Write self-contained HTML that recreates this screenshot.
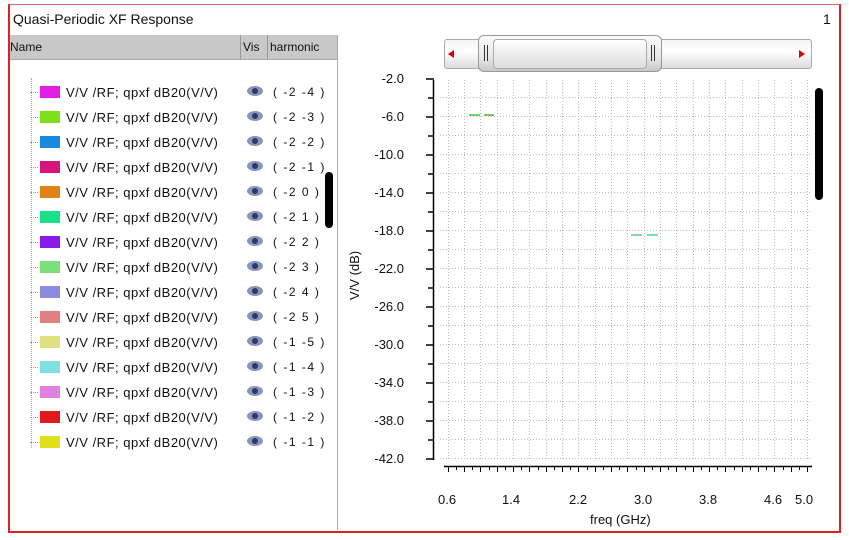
<!DOCTYPE html>
<html><head><style>
body{margin:0;width:849px;height:540px;background:#fff;font-family:"Liberation Sans","DejaVu Sans",sans-serif;position:relative;overflow:hidden}
.a{position:absolute}
.row{position:absolute;left:30px;height:14px;font-size:13px;color:#111;white-space:nowrap}
.sw{position:absolute;left:10px;top:0px;width:20px;height:12px}
.dots{position:absolute;left:0;top:6px;width:8px;border-top:1px dotted #999}
.lbl{position:absolute;left:36px;top:-1px;letter-spacing:0.5px}
.eye{position:absolute;left:217px;top:0px;width:16px;height:10px;border-radius:50%;background:#8a96b8}
.eye:after{content:"";position:absolute;left:5px;top:2px;width:6px;height:6px;border-radius:50%;background:#2a3a6a}
.h{position:absolute;left:243px;top:-1px;letter-spacing:1.5px;font-size:12px}
.yl{position:absolute;left:358px;width:46px;text-align:right;font-size:13px;color:#111}
.xl{position:absolute;top:519px;font-size:13px;color:#111}
</style></head><body>
<div class="a" style="left:8px;top:4px;width:829px;height:526px;border:2px solid #d22;border-top:1px solid #d66"></div>
<div class="a" style="left:13px;top:11px;font-size:14px;color:#111">Quasi-Periodic XF Response</div>
<div class="a" style="left:823px;top:11px;font-size:14px;color:#111">1</div>
<div class="a" style="left:10px;top:35px;width:327px;height:24px;background:#c8c8c8;border-bottom:1px solid #aaa"></div>
<div class="a" style="left:10px;top:40px;font-size:12px;color:#111">Name</div>
<div class="a" style="left:240px;top:35px;width:1px;height:24px;background:#999"></div>
<div class="a" style="left:243px;top:40px;font-size:12px;color:#111">Vis</div>
<div class="a" style="left:267px;top:35px;width:1px;height:24px;background:#999"></div>
<div class="a" style="left:270px;top:40px;font-size:12px;color:#111">harmonic</div>
<div class="a" style="left:337px;top:35px;width:1px;height:495px;background:#aaa"></div>
<div class="a" style="left:31px;top:78px;height:370px;border-left:1px dotted #aaa"></div>
<div class="a" style="left:325px;top:172px;width:8px;height:56px;background:#000;border-radius:4px"></div>

<div class="row" style="top:86px"><div class="dots"></div><div class="sw" style="background:#e21ee2"></div><div class="lbl">V/V /RF; qpxf dB20(V/V)</div><div class="eye"></div><div class="h">( -2 -4 )</div></div>
<div class="row" style="top:111px"><div class="dots"></div><div class="sw" style="background:#7de01a"></div><div class="lbl">V/V /RF; qpxf dB20(V/V)</div><div class="eye"></div><div class="h">( -2 -3 )</div></div>
<div class="row" style="top:136px"><div class="dots"></div><div class="sw" style="background:#1a8ae0"></div><div class="lbl">V/V /RF; qpxf dB20(V/V)</div><div class="eye"></div><div class="h">( -2 -2 )</div></div>
<div class="row" style="top:161px"><div class="dots"></div><div class="sw" style="background:#d6157a"></div><div class="lbl">V/V /RF; qpxf dB20(V/V)</div><div class="eye"></div><div class="h">( -2 -1 )</div></div>
<div class="row" style="top:186px"><div class="dots"></div><div class="sw" style="background:#e0821a"></div><div class="lbl">V/V /RF; qpxf dB20(V/V)</div><div class="eye"></div><div class="h">( -2 0 )</div></div>
<div class="row" style="top:211px"><div class="dots"></div><div class="sw" style="background:#1ae08a"></div><div class="lbl">V/V /RF; qpxf dB20(V/V)</div><div class="eye"></div><div class="h">( -2 1 )</div></div>
<div class="row" style="top:236px"><div class="dots"></div><div class="sw" style="background:#8a1ae8"></div><div class="lbl">V/V /RF; qpxf dB20(V/V)</div><div class="eye"></div><div class="h">( -2 2 )</div></div>
<div class="row" style="top:261px"><div class="dots"></div><div class="sw" style="background:#7ae07a"></div><div class="lbl">V/V /RF; qpxf dB20(V/V)</div><div class="eye"></div><div class="h">( -2 3 )</div></div>
<div class="row" style="top:286px"><div class="dots"></div><div class="sw" style="background:#8a8ae0"></div><div class="lbl">V/V /RF; qpxf dB20(V/V)</div><div class="eye"></div><div class="h">( -2 4 )</div></div>
<div class="row" style="top:311px"><div class="dots"></div><div class="sw" style="background:#e08080"></div><div class="lbl">V/V /RF; qpxf dB20(V/V)</div><div class="eye"></div><div class="h">( -2 5 )</div></div>
<div class="row" style="top:336px"><div class="dots"></div><div class="sw" style="background:#e0e080"></div><div class="lbl">V/V /RF; qpxf dB20(V/V)</div><div class="eye"></div><div class="h">( -1 -5 )</div></div>
<div class="row" style="top:361px"><div class="dots"></div><div class="sw" style="background:#80e0e0"></div><div class="lbl">V/V /RF; qpxf dB20(V/V)</div><div class="eye"></div><div class="h">( -1 -4 )</div></div>
<div class="row" style="top:386px"><div class="dots"></div><div class="sw" style="background:#e080e0"></div><div class="lbl">V/V /RF; qpxf dB20(V/V)</div><div class="eye"></div><div class="h">( -1 -3 )</div></div>
<div class="row" style="top:411px"><div class="dots"></div><div class="sw" style="background:#e01a1a"></div><div class="lbl">V/V /RF; qpxf dB20(V/V)</div><div class="eye"></div><div class="h">( -1 -2 )</div></div>
<div class="row" style="top:436px"><div class="dots"></div><div class="sw" style="background:#e0e01a"></div><div class="lbl">V/V /RF; qpxf dB20(V/V)</div><div class="eye"></div><div class="h">( -1 -1 )</div></div>

<!-- slider -->
<div class="a" style="left:444px;top:39px;width:366px;height:28px;border:1px solid #aaa;border-radius:3px;background:linear-gradient(#f4f4f4,#fff 40%,#ddd)"></div>
<div class="a" style="left:448px;top:50px;width:0;height:0;border:4px solid transparent;border-right:6px solid #d00;border-left:0"></div>
<div class="a" style="left:799px;top:50px;width:0;height:0;border:4px solid transparent;border-left:6px solid #d00;border-right:0"></div>
<div class="a" style="left:478px;top:35px;width:182px;height:35px;border:1px solid #999;border-radius:6px;background:linear-gradient(#fafafa,#e8e8e8 60%,#c8c8c8)"></div>
<div class="a" style="left:493px;top:39px;width:152px;height:28px;border:1px solid #aaa;border-radius:4px;background:linear-gradient(#fff,#eee 50%,#ddd)"></div>
<div class="a" style="left:484px;top:45px;width:2px;height:16px;border-left:1px solid #333;border-right:1px solid #333"></div>
<div class="a" style="left:651px;top:45px;width:2px;height:16px;border-left:1px solid #333;border-right:1px solid #333"></div>
<div class="a" style="left:815px;top:88px;width:8px;height:112px;background:#000;border-radius:4px"></div>

<svg class="a" style="left:0;top:0" width="849" height="540">
<g stroke="#bbb" stroke-width="1" stroke-dasharray="1,2">
<line x1="440" y1="97.5" x2="811" y2="97.5"/><line x1="440" y1="116.5" x2="811" y2="116.5"/><line x1="440" y1="135.5" x2="811" y2="135.5"/><line x1="440" y1="154.5" x2="811" y2="154.5"/><line x1="440" y1="173.5" x2="811" y2="173.5"/><line x1="440" y1="192.5" x2="811" y2="192.5"/><line x1="440" y1="211.5" x2="811" y2="211.5"/><line x1="440" y1="230.5" x2="811" y2="230.5"/><line x1="440" y1="249.5" x2="811" y2="249.5"/><line x1="440" y1="268.5" x2="811" y2="268.5"/><line x1="440" y1="287.5" x2="811" y2="287.5"/><line x1="440" y1="306.5" x2="811" y2="306.5"/><line x1="440" y1="325.5" x2="811" y2="325.5"/><line x1="440" y1="344.5" x2="811" y2="344.5"/><line x1="440" y1="363.5" x2="811" y2="363.5"/><line x1="440" y1="382.5" x2="811" y2="382.5"/><line x1="440" y1="401.5" x2="811" y2="401.5"/><line x1="440" y1="420.5" x2="811" y2="420.5"/><line x1="440" y1="439.5" x2="811" y2="439.5"/><line x1="440" y1="458.5" x2="811" y2="458.5"/>
<line x1="448.5" y1="80" x2="448.5" y2="460"/><line x1="464.5" y1="80" x2="464.5" y2="460"/><line x1="480.5" y1="80" x2="480.5" y2="460"/><line x1="497.5" y1="80" x2="497.5" y2="460"/><line x1="513.5" y1="80" x2="513.5" y2="460"/><line x1="529.5" y1="80" x2="529.5" y2="460"/><line x1="546.5" y1="80" x2="546.5" y2="460"/><line x1="562.5" y1="80" x2="562.5" y2="460"/><line x1="578.5" y1="80" x2="578.5" y2="460"/><line x1="595.5" y1="80" x2="595.5" y2="460"/><line x1="611.5" y1="80" x2="611.5" y2="460"/><line x1="627.5" y1="80" x2="627.5" y2="460"/><line x1="644.5" y1="80" x2="644.5" y2="460"/><line x1="660.5" y1="80" x2="660.5" y2="460"/><line x1="676.5" y1="80" x2="676.5" y2="460"/><line x1="693.5" y1="80" x2="693.5" y2="460"/><line x1="709.5" y1="80" x2="709.5" y2="460"/><line x1="725.5" y1="80" x2="725.5" y2="460"/><line x1="742.5" y1="80" x2="742.5" y2="460"/><line x1="758.5" y1="80" x2="758.5" y2="460"/><line x1="774.5" y1="80" x2="774.5" y2="460"/><line x1="791.5" y1="80" x2="791.5" y2="460"/><line x1="807.5" y1="80" x2="807.5" y2="460"/>
</g>
<g stroke="#000" stroke-width="1.5">
<line x1="433.5" y1="80" x2="433.5" y2="460"/>
<line x1="426" y1="79" x2="434" y2="79"/><line x1="426" y1="117" x2="434" y2="117"/><line x1="426" y1="155" x2="434" y2="155"/><line x1="426" y1="193" x2="434" y2="193"/><line x1="426" y1="231" x2="434" y2="231"/><line x1="426" y1="269" x2="434" y2="269"/><line x1="426" y1="307" x2="434" y2="307"/><line x1="426" y1="345" x2="434" y2="345"/><line x1="426" y1="383" x2="434" y2="383"/><line x1="426" y1="421" x2="434" y2="421"/><line x1="426" y1="459" x2="434" y2="459"/>
<line x1="428" y1="98" x2="434" y2="98"/><line x1="428" y1="136" x2="434" y2="136"/><line x1="428" y1="174" x2="434" y2="174"/><line x1="428" y1="212" x2="434" y2="212"/><line x1="428" y1="250" x2="434" y2="250"/><line x1="428" y1="288" x2="434" y2="288"/><line x1="428" y1="326" x2="434" y2="326"/><line x1="428" y1="364" x2="434" y2="364"/><line x1="428" y1="402" x2="434" y2="402"/><line x1="428" y1="440" x2="434" y2="440"/>
<line x1="444" y1="466.5" x2="812" y2="466.5"/>
</g>
<g stroke="#000" stroke-width="1">
<path d="M448.5 466v6M456.5 466v4M464.5 466v6M472.5 466v4M480.5 466v6M489.5 466v4M497.5 466v6M505.5 466v4M513.5 466v6M521.5 466v4M529.5 466v6M538.5 466v4M546.5 466v6M554.5 466v4M562.5 466v6M570.5 466v4M578.5 466v6M587.5 466v4M595.5 466v6M603.5 466v4M611.5 466v6M619.5 466v4M627.5 466v6M636.5 466v4M644.5 466v6M652.5 466v4M660.5 466v6M668.5 466v4M676.5 466v6M685.5 466v4M693.5 466v6M701.5 466v4M709.5 466v6M717.5 466v4M725.5 466v6M734.5 466v4M742.5 466v6M750.5 466v4M758.5 466v6M766.5 466v4M774.5 466v6M783.5 466v4M791.5 466v6M799.5 466v4M807.5 466v6"/>
</g>
<line x1="469" y1="115" x2="480" y2="115" stroke="#3c3" stroke-width="1.5"/>
<line x1="484" y1="115" x2="494" y2="115" stroke="#5a3" stroke-width="1.5"/>
<line x1="631" y1="235" x2="642" y2="235" stroke="#6bb" stroke-width="1.5"/>
<line x1="647" y1="235" x2="658" y2="235" stroke="#3d9" stroke-width="1.5"/>
<text x="0" y="0" transform="translate(359,300) rotate(-90)" font-family="Liberation Sans,sans-serif" font-size="13" fill="#111">V/V (dB)</text>
</svg>

<div class="yl" style="top:71px">-2.0</div>
<div class="yl" style="top:109px">-6.0</div>
<div class="yl" style="top:147px">-10.0</div>
<div class="yl" style="top:185px">-14.0</div>
<div class="yl" style="top:223px">-18.0</div>
<div class="yl" style="top:261px">-22.0</div>
<div class="yl" style="top:299px">-26.0</div>
<div class="yl" style="top:337px">-30.0</div>
<div class="yl" style="top:375px">-34.0</div>
<div class="yl" style="top:413px">-38.0</div>
<div class="yl" style="top:451px">-42.0</div>

<div class="xl" style="left:438px;top:492px">0.6</div>
<div class="xl" style="left:502px;top:492px">1.4</div>
<div class="xl" style="left:569px;top:492px">2.2</div>
<div class="xl" style="left:634px;top:492px">3.0</div>
<div class="xl" style="left:699px;top:492px">3.8</div>
<div class="xl" style="left:764px;top:492px">4.6</div>
<div class="xl" style="left:795px;top:492px">5.0</div>
<div class="xl" style="left:590px;top:512px">freq (GHz)</div>
</body></html>
